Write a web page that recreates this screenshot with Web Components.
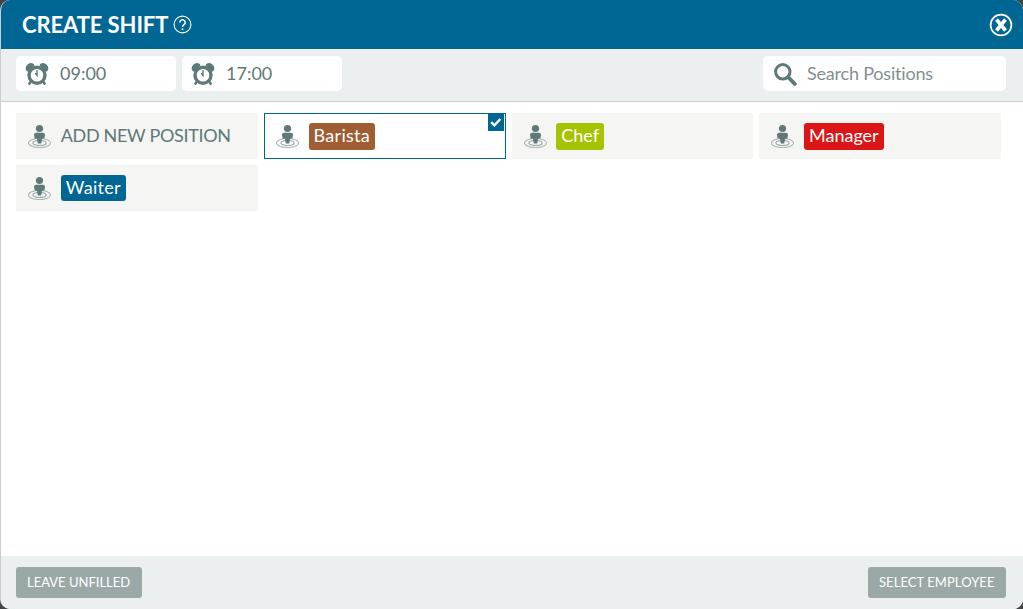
<!DOCTYPE html>
<html>
<head>
<meta charset="utf-8">
<title>Create shift</title>
<style>
    html, body { margin: 0; height: 100%; background: #444; }
    body { font-family: Lato, "Liberation Sans", sans-serif; }
</style>
</head>
<body>

<shift-modal>
    <span slot="title">CREATE SHIFT</span>
    <time-field slot="tools" value="09:00"></time-field>
    <time-field slot="tools" value="17:00"></time-field>
    <search-field slot="search" placeholder="Search Positions"></search-field>

    <position-tile plain>ADD NEW POSITION</position-tile>
    <position-tile color="#a05c33" selected tall style="--ls: .3px">Barista</position-tile>
    <position-tile color="#a5c300" tall>Chef</position-tile>
    <position-tile color="#dc1616" tall>Manager</position-tile>
    <position-tile color="#006794" style="--ls: .3px">Waiter</position-tile>

    <flat-button slot="left">LEAVE UNFILLED</flat-button>
    <flat-button slot="right" style="letter-spacing: .07px">SELECT EMPLOYEE</flat-button>
</shift-modal>

<script>
const clockIcon = `
    <svg width="24" height="24" viewBox="0 0 24 24">
        <path d="M1.500 9a5.200 5.200 0 0 1 7-7.200l1 1.500-6.500 6.500z" fill="#5f7878"/>
        <path d="M22.500 9a5.200 5.200 0 0 0-7-7.200l-1 1.500 6.500 6.500z" fill="#5f7878"/>
        <circle cx="12" cy="13.200" r="8" fill="#fff" stroke="#5f7878" stroke-width="3.400"/>
        <path d="M12 8v5.500l-1.800-2.400" fill="none" stroke="#5f7878" stroke-width="1.400"/>
        <path d="M5.800 19.600l-2 3M18.200 19.600l2 3" stroke="#5f7878" stroke-width="2.600"/>
    </svg>`;

const personIcon = `
    <svg width="24" height="24" viewBox="0 0 24 24">
        <ellipse cx="12.500" cy="19" rx="11" ry="4.600" fill="none" stroke="#a9b7b7" stroke-width="1.100"/>
        <ellipse cx="12.500" cy="19" rx="6.600" ry="2.500" fill="none" stroke="#8ea1a1" stroke-width="1.100"/>
        <circle cx="12.500" cy="4.500" r="3.600" fill="#5f7878"/>
        <path d="M7 11c0-1.500 1-2.200 2-2.200h7c1 0 2 .7 2 2.200l-.5 3-2.500 1-.8 4.500h-3.400l-.8-4.500-2.500-1z" fill="#5f7878"/>
    </svg>`;

class ShiftModal extends HTMLElement {
    constructor() {
        super();
        this.attachShadow({ mode: 'open' });
        this.shadowRoot.innerHTML = `
            <style>
                :host {
                    display: flex;
                    flex-direction: column;
                    height: 609px;
                    background: #fff;
                    border-radius: 10px;
                    overflow: hidden;
                    box-sizing: border-box;
                    border-left: 1px solid #ccc;
                }
                header {
                    display: flex;
                    align-items: center;
                    height: 49px;
                    margin-left: -1px;
                    padding: 0 10px 0 22px;
                    background: #006794;
                    color: #fff;
                    font-size: 22px;
                    font-weight: 700;
                    letter-spacing: -0.1px;
                }
                header .help { margin-left: 5px; display: flex; }
                header .close { margin-left: auto; display: flex; }
                .tools {
                    display: flex;
                    gap: 6px;
                    height: 53px;
                    box-sizing: border-box;
                    padding: 7px 17px 0 15px;
                    background: #ebeff0;
                    border-bottom: 1px solid #ccc;
                }
                .tools .push { margin-left: auto; }
                main {
                    flex: 1;
                    display: grid;
                    grid-template-columns: repeat(4, 241.75px);
                    grid-auto-rows: 46px;
                    gap: 6px;
                    align-content: start;
                    padding: 11px 0 0 15px;
                }
                footer {
                    display: flex;
                    justify-content: space-between;
                    height: 53px;
                    box-sizing: border-box;
                    padding: 11px 17px 0 15px;
                    background: #ebeff0;
                }
            </style>
            <header>
                <slot name="title"></slot>
                <span class="help">
                    <svg width="19" height="19" viewBox="0 0 19 19">
                        <circle cx="9.500" cy="9.500" r="8.400" fill="none" stroke="#fff" stroke-width="1.100"/>
                        <path d="M6.800 7.400a2.700 2.600 0 1 1 4.300 2.100c-1 .8-1.600 1.200-1.600 2.500" fill="none" stroke="#fff" stroke-width="1.500"/>
                        <circle cx="9.500" cy="14.200" r="1" fill="#fff"/>
                    </svg>
                </span>
                <span class="close">
                    <svg width="24" height="24" viewBox="0 0 24 24">
                        <circle cx="12" cy="12" r="10.400" fill="none" stroke="#fff" stroke-width="1.700"/>
                        <path d="M7.500 6.500l9 11M16.500 6.500l-9 11" stroke="#fff" stroke-width="3.600"/>
                    </svg>
                </span>
            </header>
            <div class="tools">
                <slot name="tools"></slot>
                <span class="push"><slot name="search"></slot></span>
            </div>
            <main><slot></slot></main>
            <footer>
                <slot name="left"></slot>
                <slot name="right"></slot>
            </footer>
        `;
    }
}

class TimeField extends HTMLElement {
    constructor() {
        super();
        this.attachShadow({ mode: 'open' });
        this.shadowRoot.innerHTML = `
            <style>
                :host {
                    display: flex;
                    align-items: center;
                    gap: 11px;
                    width: 160px;
                    height: 35px;
                    box-sizing: border-box;
                    padding-left: 9px;
                    background: #fff;
                    border-radius: 5px;
                    color: #5f7878;
                    font-size: 18px;
                }
                svg { display: block; }
                .value { margin-top: -2px; }
            </style>
            ${clockIcon}
            <span class="value"></span>
        `;
    }

    connectedCallback() {
        this.shadowRoot.querySelector('.value').textContent = this.getAttribute('value');
    }
}

class SearchField extends HTMLElement {
    constructor() {
        super();
        this.attachShadow({ mode: 'open' });
        this.shadowRoot.innerHTML = `
            <style>
                :host {
                    display: flex;
                    align-items: center;
                    gap: 10px;
                    width: 243px;
                    height: 35px;
                    box-sizing: border-box;
                    padding-left: 10px;
                    background: #fff;
                    border-radius: 5px;
                    color: #7f9090;
                    font-size: 18px;
                    letter-spacing: -0.2px;
                }
                svg { display: block; }
                .text { margin-top: -2px; }
            </style>
            <svg width="24" height="24" viewBox="0 0 24 24">
                <circle cx="9.800" cy="9.800" r="7.200" fill="none" stroke="#5f7878" stroke-width="3"/>
                <path d="M15 15l6.800 6.800" stroke="#5f7878" stroke-width="3.800" stroke-linecap="round"/>
            </svg>
            <span class="text"></span>
        `;
    }

    connectedCallback() {
        this.shadowRoot.querySelector('.text').textContent = this.getAttribute('placeholder');
    }
}

class PositionTile extends HTMLElement {
    constructor() {
        super();
        this.attachShadow({ mode: 'open' });
        this.shadowRoot.innerHTML = `
            <style>
                :host {
                    position: relative;
                    display: flex;
                    align-items: center;
                    gap: 9.750px;
                    box-sizing: border-box;
                    padding-left: 11px;
                    background: #f5f6f4;
                    font-size: 18px;
                }
                :host([selected]) {
                    background: #fff;
                    border: 1px solid #006794;
                    padding-left: 10px;
                }
                svg { display: block; flex: none; }
                .tag {
                    padding: 0 5px;
                    height: 26px;
                    line-height: 25px;
                    border-radius: 3px;
                    color: #fff;
                    letter-spacing: var(--ls, 0);
                }
                :host([tall]) .tag { height: 27px; margin-top: 1px; }
                :host([plain]) .tag {
                    padding: 0;
                    color: #5f7878;
                    letter-spacing: -0.33px;
                }
                .check {
                    position: absolute;
                    top: 0;
                    right: 1px;
                    width: 16px;
                    height: 17px;
                    background: #006794;
                    display: none;
                }
                :host([selected]) .check { display: block; }
            </style>
            ${personIcon}
            <span class="tag"><slot></slot></span>
            <span class="check">
                <svg width="16" height="17" viewBox="0 0 16 17">
                    <path d="M3.200 8.200l3.200 3.200 6-6.400" fill="none" stroke="#fff" stroke-width="2.400"/>
                </svg>
            </span>
        `;
    }

    connectedCallback() {
        if (this.hasAttribute('color')) {
            this.shadowRoot.querySelector('.tag').style.background = this.getAttribute('color');
        }
    }
}

class FlatButton extends HTMLElement {
    constructor() {
        super();
        this.attachShadow({ mode: 'open' });
        this.shadowRoot.innerHTML = `
            <style>
                :host {
                    display: inline-flex;
                    align-items: center;
                    height: 31px;
                    box-sizing: border-box;
                    padding: 0 11.500px 1px 11px;
                    background: #9aa9a8;
                    border-radius: 3px;
                    color: #fff;
                    font-size: 13px;
                }
            </style>
            <slot></slot>
        `;
    }
}

customElements.define('shift-modal', ShiftModal);
customElements.define('time-field', TimeField);
customElements.define('search-field', SearchField);
customElements.define('position-tile', PositionTile);
customElements.define('flat-button', FlatButton);
</script>
</body>
</html>
